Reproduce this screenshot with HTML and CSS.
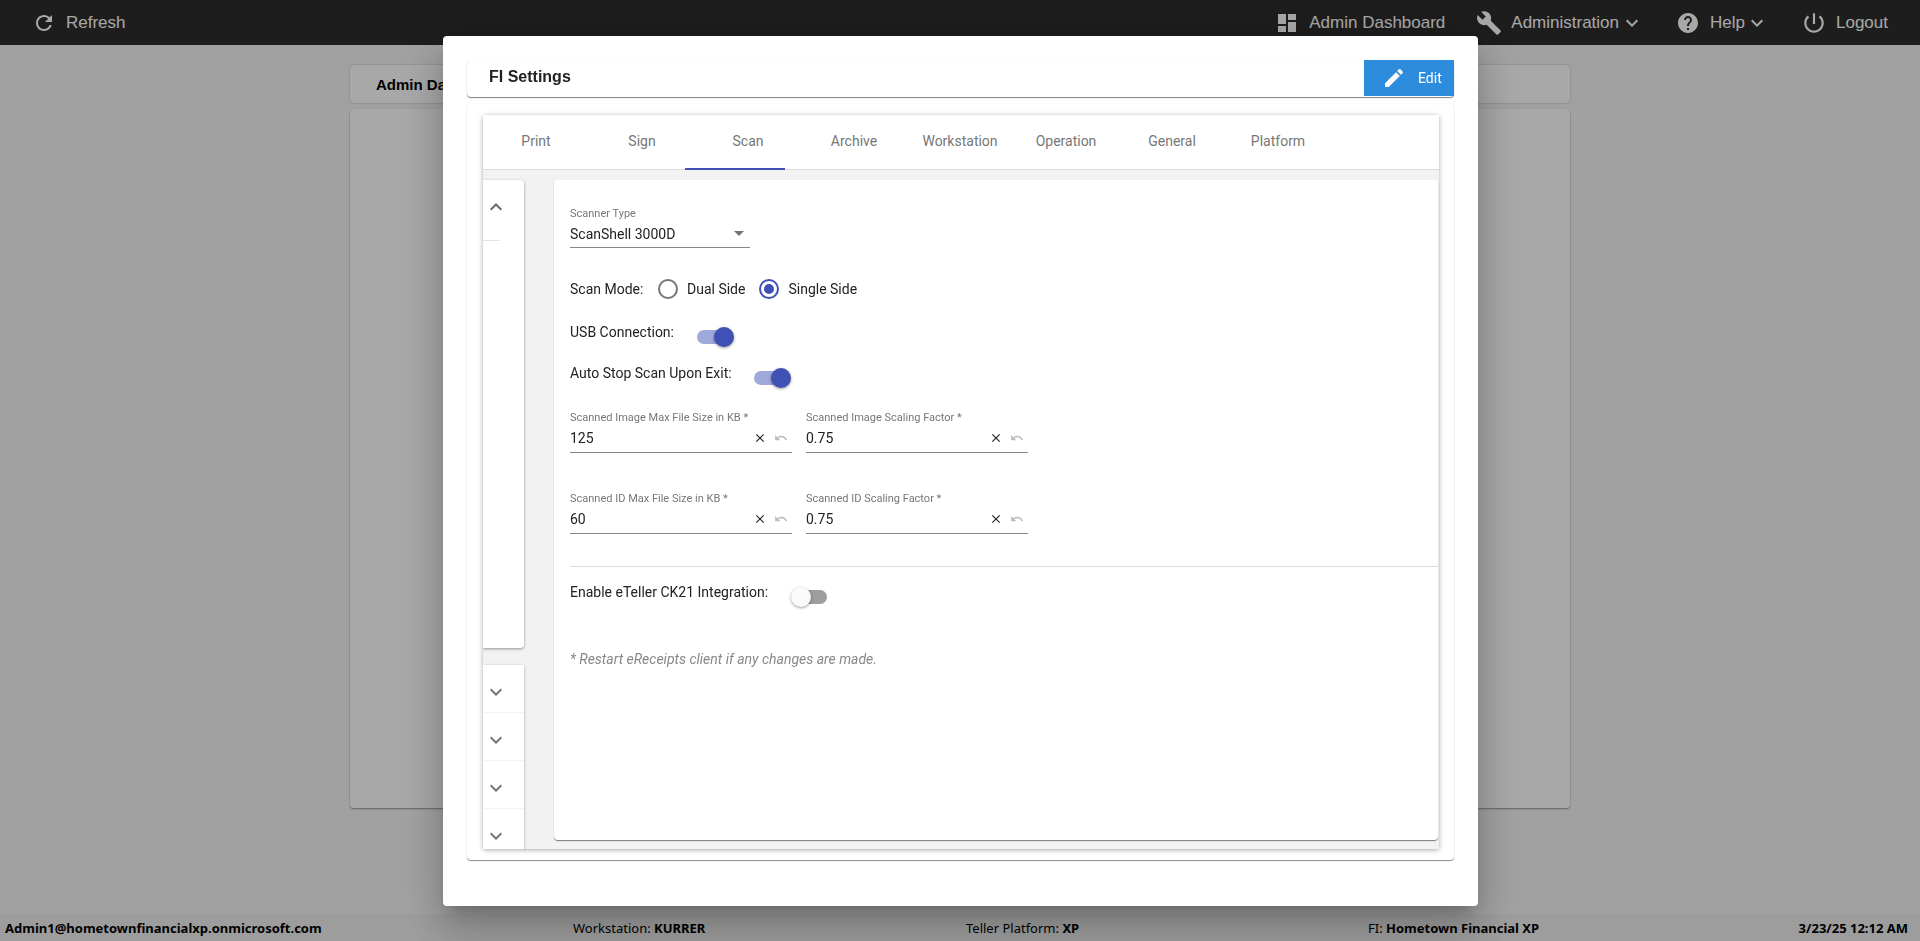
FILE: index.html
```html
<!DOCTYPE html>
<html lang="en">
<head>
<meta charset="utf-8">
<title>FI Settings</title>
<link rel="stylesheet" href="styles.css">
</head>
<body>
<div class="app">
  <header class="navbar">
    <div class="nav-item refresh">
      <svg class="icon" viewBox="0 0 24 24"><path d="M17.65 6.35C16.2 4.9 14.21 4 12 4c-4.42 0-7.99 3.58-7.99 8s3.57 8 7.99 8c3.73 0 6.84-2.55 7.73-6h-2.08c-.82 2.33-3.04 4-5.65 4-3.31 0-6-2.69-6-6s2.69-6 6-6c1.66 0 3.14.69 4.22 1.78L13 11h7V4l-2.35 2.35z"/></svg>
      <span>Refresh</span>
    </div>
    <nav class="nav-right">
      <div class="nav-item dash">
        <svg class="icon" viewBox="0 0 24 24"><path d="M3 13h8V3H3v10zm0 8h8v-6H3v6zm10 0h8V11h-8v10zm0-18v6h8V3h-8z"/></svg>
        <span>Admin Dashboard</span>
      </div>
      <div class="nav-item admin">
        <svg class="icon wrench" viewBox="0 0 24 24"><path d="M22.7 19l-9.1-9.1c.9-2.3.4-5-1.5-6.9-2-2-5-2.4-7.4-1.3L9 6 6 9 1.6 4.7C.4 7.1.9 10.1 2.9 12.1c1.9 1.9 4.6 2.4 6.9 1.5l9.1 9.1c.4.4 1 .4 1.4 0l2.3-2.3c.5-.4.5-1.1.1-1.4z"/></svg>
        <span>Administration</span>
        <svg class="icon caret" viewBox="0 0 24 24"><path d="M16.59 8.59L12 13.17 7.41 8.59 6 10l6 6 6-6z"/></svg>
      </div>
      <div class="nav-item help">
        <svg class="icon" viewBox="0 0 24 24"><path d="M12 2C6.48 2 2 6.48 2 12s4.48 10 10 10 10-4.48 10-10S17.52 2 12 2zm1 17h-2v-2h2v2zm2.07-7.75l-.9.92C13.45 12.9 13 13.5 13 15h-2v-.5c0-1.1.45-2.1 1.17-2.83l1.24-1.26c.37-.36.59-.86.59-1.41 0-1.1-.9-2-2-2s-2 .9-2 2H8c0-2.21 1.79-4 4-4s4 1.79 4 4c0 .88-.36 1.68-.93 2.25z"/></svg>
        <span>Help</span>
        <svg class="icon caret" viewBox="0 0 24 24"><path d="M16.59 8.59L12 13.17 7.41 8.59 6 10l6 6 6-6z"/></svg>
      </div>
      <div class="nav-item logout">
        <svg class="icon" viewBox="0 0 24 24"><path d="M13 3h-2v10h2V3zm4.83 2.17l-1.42 1.42C17.99 7.86 19 9.81 19 12c0 3.87-3.13 7-7 7s-7-3.13-7-7c0-2.19 1.01-4.14 2.58-5.42L6.17 5.17C4.23 6.82 3 9.26 3 12c0 4.97 4.03 9 9 9s9-4.03 9-9c0-2.74-1.23-5.18-3.17-6.83z"/></svg>
        <span>Logout</span>
      </div>
    </nav>
  </header>

  <main class="page">
    <div class="page-head">Admin Dashboard</div>
    <div class="page-body"></div>
  </main>

  <footer class="status">
    <div class="user">Admin1@hometownfinancialxp.onmicrosoft.com</div>
    <div>Workstation: <b>KURRER</b></div>
    <div>Teller Platform: <b>XP</b></div>
    <div>FI: <b>Hometown Financial XP</b></div>
    <div class="date">3/23/25 12:12 AM</div>
  </footer>
</div>

<div class="overlay">
  <section class="modal">
    <div class="modal-head">
      <h2>FI Settings</h2>
      <button class="edit-btn" type="button">
        <svg class="icon" viewBox="0 0 24 24"><path d="M3 17.25V21h3.75L17.81 9.94l-3.75-3.75L3 17.25zM20.71 7.04c.39-.39.39-1.02 0-1.41l-2.34-2.34c-.39-.39-1.02-.39-1.41 0l-1.83 1.83 3.75 3.75 1.83-1.83z"/></svg>
        <span>Edit</span>
      </button>
    </div>
    <div class="panel">
      <div class="tabbed">
        <div class="tabs">
          <div class="tab">Print</div>
          <div class="tab">Sign</div>
          <div class="tab">Scan</div>
          <div class="tab">Archive</div>
          <div class="tab">Workstation</div>
          <div class="tab">Operation</div>
          <div class="tab">General</div>
          <div class="tab">Platform</div>
          <div class="ink"></div>
        </div>
        <div class="content">
          <aside class="side">
            <div class="side-open">
              <div class="side-head">
                <svg class="icon chev" viewBox="0 0 24 24"><path d="M12 8l-6 6 1.41 1.41L12 10.83l4.59 4.58L18 14z"/></svg>
              </div>
            </div>
            <div class="side-closed">
              <div class="side-row"><svg class="icon chev" viewBox="0 0 24 24"><path d="M16.59 8.59L12 13.17 7.41 8.59 6 10l6 6 6-6z"/></svg></div>
              <div class="side-row"><svg class="icon chev" viewBox="0 0 24 24"><path d="M16.59 8.59L12 13.17 7.41 8.59 6 10l6 6 6-6z"/></svg></div>
              <div class="side-row"><svg class="icon chev" viewBox="0 0 24 24"><path d="M16.59 8.59L12 13.17 7.41 8.59 6 10l6 6 6-6z"/></svg></div>
              <div class="side-row"><svg class="icon chev" viewBox="0 0 24 24"><path d="M16.59 8.59L12 13.17 7.41 8.59 6 10l6 6 6-6z"/></svg></div>
            </div>
          </aside>
          <div class="form-card">
            <div class="select-field">
              <label class="small-label">Scanner Type</label>
              <div class="select-value"><span>ScanShell 3000D</span><i class="arrow"></i></div>
            </div>

            <div class="radio-row">
              <span class="radio-title">Scan Mode:</span>
              <span class="radio"></span><span class="radio-text">Dual Side</span>
              <span class="radio on"></span><span class="radio-text">Single Side</span>
            </div>

            <div class="toggle-row usb">
              <span>USB Connection:</span>
              <span class="toggle on"><i></i></span>
            </div>
            <div class="toggle-row auto">
              <span>Auto Stop Scan Upon Exit:</span>
              <span class="toggle on"><i></i></span>
            </div>

            <div class="field-grid">
              <div class="field">
                <label class="small-label">Scanned Image Max File Size in KB *</label>
                <div class="input"><span>125</span>
                  <svg class="icon x" viewBox="0 0 24 24"><path d="M19 6.41L17.59 5 12 10.59 6.41 5 5 6.41 10.59 12 5 17.59 6.41 19 12 13.41 17.59 19 19 17.59 13.41 12z"/></svg>
                  <svg class="icon undo" viewBox="0 0 24 24"><path d="M12.5 8c-2.65 0-5.05.99-6.9 2.6L2 7v9h9l-3.62-3.62c1.39-1.16 3.16-1.88 5.12-1.88 3.54 0 6.55 2.31 7.6 5.5l2.37-.78C21.08 11.03 17.15 8 12.5 8z"/></svg>
                </div>
              </div>
              <div class="field">
                <label class="small-label">Scanned Image Scaling Factor *</label>
                <div class="input"><span>0.75</span>
                  <svg class="icon x" viewBox="0 0 24 24"><path d="M19 6.41L17.59 5 12 10.59 6.41 5 5 6.41 10.59 12 5 17.59 6.41 19 12 13.41 17.59 19 19 17.59 13.41 12z"/></svg>
                  <svg class="icon undo" viewBox="0 0 24 24"><path d="M12.5 8c-2.65 0-5.05.99-6.9 2.6L2 7v9h9l-3.62-3.62c1.39-1.16 3.16-1.88 5.12-1.88 3.54 0 6.55 2.31 7.6 5.5l2.37-.78C21.08 11.03 17.15 8 12.5 8z"/></svg>
                </div>
              </div>
              <div class="field">
                <label class="small-label">Scanned ID Max File Size in KB *</label>
                <div class="input"><span>60</span>
                  <svg class="icon x" viewBox="0 0 24 24"><path d="M19 6.41L17.59 5 12 10.59 6.41 5 5 6.41 10.59 12 5 17.59 6.41 19 12 13.41 17.59 19 19 17.59 13.41 12z"/></svg>
                  <svg class="icon undo" viewBox="0 0 24 24"><path d="M12.5 8c-2.65 0-5.05.99-6.9 2.6L2 7v9h9l-3.62-3.62c1.39-1.16 3.16-1.88 5.12-1.88 3.54 0 6.55 2.31 7.6 5.5l2.37-.78C21.08 11.03 17.15 8 12.5 8z"/></svg>
                </div>
              </div>
              <div class="field">
                <label class="small-label">Scanned ID Scaling Factor *</label>
                <div class="input"><span>0.75</span>
                  <svg class="icon x" viewBox="0 0 24 24"><path d="M19 6.41L17.59 5 12 10.59 6.41 5 5 6.41 10.59 12 5 17.59 6.41 19 12 13.41 17.59 19 19 17.59 13.41 12z"/></svg>
                  <svg class="icon undo" viewBox="0 0 24 24"><path d="M12.5 8c-2.65 0-5.05.99-6.9 2.6L2 7v9h9l-3.62-3.62c1.39-1.16 3.16-1.88 5.12-1.88 3.54 0 6.55 2.31 7.6 5.5l2.37-.78C21.08 11.03 17.15 8 12.5 8z"/></svg>
                </div>
              </div>
            </div>

            <hr class="rule">

            <div class="toggle-row eteller">
              <span>Enable eTeller CK21 Integration:</span>
              <span class="toggle"><i></i></span>
            </div>

            <p class="note">* Restart eReceipts client if any changes are made.</p>
          </div>
        </div>
      </div>
    </div>
  </section>
</div>
</body>
</html>
```
FILE: styles.css
```css
* { box-sizing: border-box; }
html, body { margin: 0; height: 100%; overflow: hidden; }
body { font-family: Roboto, "Liberation Sans", sans-serif; font-size: 14px; color: #222; background: #f5f5f5; }

.icon { display: block; width: 24px; height: 24px; fill: currentColor; flex: none; }

.app { height: 941px; display: flex; flex-direction: column; }

/* Navbar */
.navbar { height: 45px; flex: none; background: #2c2c2c; color: #fff; display: flex; align-items: center; justify-content: space-between; font-family: "Liberation Sans", Arial, sans-serif; font-size: 17px; }
.nav-item { display: flex; align-items: center; }
.nav-right { display: flex; align-items: center; padding-right: 32px; }
.refresh { margin-left: 32px; gap: 10px; }
.dash { gap: 10px; }
.admin { margin-left: 31px; gap: 9px; }
.admin .wrench { width: 26px; height: 26px; }
.admin .caret { margin-left: -8px; margin-right: 0; }
.help { margin-left: 32px; gap: 10px; }
.help .caret { margin-left: -10px; }
.logout { margin-left: 32px; gap: 9px; }
.logout .icon { width: 26px; height: 26px; }

/* Underlying page */
.page { flex: 1; width: 1220px; margin: 0 auto; padding-top: 20px; display: flex; flex-direction: column; gap: 6px; }
.page-head { height: 38px; background: #fff; border-radius: 4px; box-shadow: 0 0 2px rgba(0,0,0,.3); padding: 11px 26px; font-family: "Liberation Sans", Arial, sans-serif; font-weight: 700; font-size: 15px; color: #000; }
.page-body { height: 699px; background: #fff; border-radius: 4px; box-shadow: 0 1px 2px rgba(0,0,0,.4); }

.status { height: 27px; flex: none; background: #eee; display: grid; grid-template-columns: 568px 393px 402px 1fr auto; align-items: center; padding: 0 12px 0 5px; font-family: "Noto Sans", "Open Sans", sans-serif; font-size: 13px; color: #000; }
.status b, .user, .date { font-weight: 700; }

/* Modal */
.overlay { position: fixed; inset: 0; background: rgba(0,0,0,.34); display: flex; justify-content: center; padding-top: 36px; padding-left: 1px; }
.modal { width: 1035px; height: 870px; background: #fff; border-radius: 4px; padding: 24px 24px 46px; box-shadow: 0 11px 15px -7px rgba(0,0,0,.2), 0 24px 38px 3px rgba(0,0,0,.14), 0 9px 46px 8px rgba(0,0,0,.12); }
.modal-head { height: 37px; display: flex; justify-content: space-between; background: #fff; border-radius: 4px; box-shadow: 0 1px 1px rgba(0,0,0,.5), 0 0 2px rgba(0,0,0,.06); padding-left: 22px; }
.modal-head h2 { margin: 0; font-family: "Liberation Sans", Arial, sans-serif; font-size: 16px; font-weight: 700; line-height: 34px; color: #222; }
.edit-btn { width: 90px; height: 36px; border: 0; padding: 0 0 0 18px; background: #2e8cdd; color: #fff; display: flex; align-items: center; gap: 12px; font-family: Roboto, sans-serif; font-size: 14px; }

.panel { margin-top: 7px; height: 756px; background: #fff; border-radius: 4px; box-shadow: 0 1px 1px rgba(0,0,0,.45), 0 0 2px rgba(0,0,0,.06); padding: 11px 15px 11px 16px; }
.tabbed { height: 734px; box-shadow: 0 1px 5px rgba(0,0,0,.35); display: flex; flex-direction: column; border-radius: 2px; }

.tabs { position: relative; height: 55px; flex: none; display: flex; border-bottom: 1px solid #ddd; background: #fff; }
.tab { width: 106px; text-align: center; line-height: 53px; color: #777; font-size: 14px; }
.ink { position: absolute; left: 202px; bottom: -1px; width: 100px; height: 2px; background: #3f51b5; }

.content { flex: 1; min-height: 0; background: #f2f2f2; display: flex; overflow: hidden; }

.side { width: 41px; flex: none; padding-top: 10px; display: flex; flex-direction: column; gap: 17px; }
.side-open { height: 468px; flex: none; background: #fff; border-radius: 0 4px 4px 0; box-shadow: 0 1px 3px rgba(0,0,0,.4); }
.side-head { position: relative; height: 61px; padding: 15px 0 0 1px; color: #666; }
.side-head::after { content: ""; position: absolute; left: 0; bottom: 0; width: 17px; height: 1px; background: #e4e4e4; }
.side-closed { background: #fff; box-shadow: 0 1px 3px rgba(0,0,0,.3); }
.side-row { height: 48px; padding: 15px 0 0 1px; color: #757575; border-bottom: 1px solid #f4f4f4; }

.form-card { width: 884px; height: 660px; margin: 10px 0 0 30px; background: #fff; border-radius: 4px; box-shadow: 0 1px 1px rgba(0,0,0,.5); padding: 27px 0 0 16px; color: #222; }

.small-label { display: block; height: 14px; font-size: 11px; line-height: 14px; color: #777; }
.select-field { width: 180px; }
.select-value { height: 27px; display: flex; justify-content: space-between; align-items: center; font-size: 14px; border-bottom: 1px solid #888; padding: 0 6px 1px 0; }
.arrow { width: 0; height: 0; border-left: 5px solid transparent; border-right: 5px solid transparent; border-top: 5px solid #757575; }

.radio-row { display: flex; align-items: center; height: 24px; margin-top: 29px; }
.radio-title { width: 88px; }
.radio { width: 20px; height: 20px; flex: none; border: 2px solid #757575; border-radius: 50%; display: flex; align-items: center; justify-content: center; }
.radio.on { border-color: #3f51b5; }
.radio.on::after { content: ""; width: 10px; height: 10px; border-radius: 50%; background: #3f51b5; }
.radio-text { margin-left: 9px; margin-right: 14px; }

.toggle-row { display: flex; align-items: flex-start; height: 41px; line-height: 24px; gap: 22px; }
.usb { margin-top: 19px; gap: 23px; }
.eteller { margin-top: 13px; gap: 25px; }
.toggle { position: relative; display: block; width: 34px; height: 14px; margin-top: 10px; border-radius: 7px; background: #9e9e9e; }
.toggle.on { background: #9fa8da; }
.toggle i { position: absolute; top: -3px; left: -2px; width: 20px; height: 20px; border-radius: 50%; background: #fafafa; box-shadow: 0 1px 3px rgba(0,0,0,.4); }
.toggle.on i { left: auto; right: -3px; background: #3f51b5; }

.field-grid { display: grid; grid-template-columns: 222px 222px; column-gap: 14px; row-gap: 39px; margin-top: 9px; }
.field { height: 42px; }
.input { height: 28px; display: flex; align-items: center; border-bottom: 1px solid #888; font-size: 14px; padding-bottom: 1px; }
.input span { flex: 1; }
.input .x { width: 14px; height: 14px; color: #222; margin-right: 7px; }
.input .undo { width: 14px; height: 14px; color: #bbb; margin-right: 4px; }

.rule { height: 1px; border: 0; margin: 32px 0 0; background: #ddd; }

.note { margin: 26px 0 0; line-height: 24px; font-style: italic; color: #888; }
```
